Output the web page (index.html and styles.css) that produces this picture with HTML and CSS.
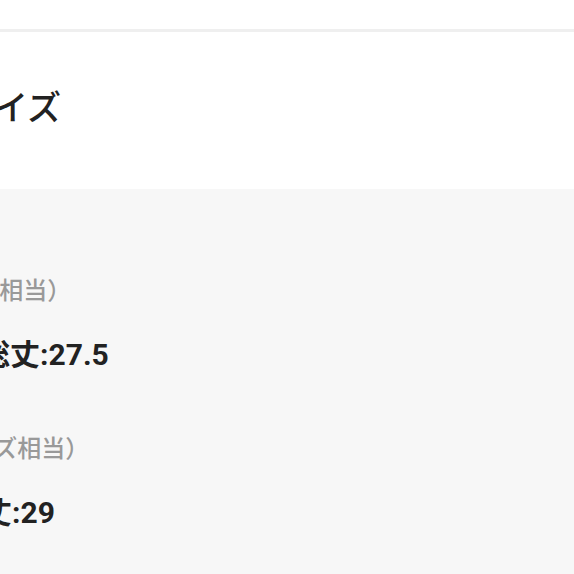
FILE: index.html
```html
<!DOCTYPE html>
<html>
<head>
  <meta charset="UTF-8">
  <meta name="viewport" content="width=device-width, initial-scale=1.0">

  <link rel="stylesheet" href="styles.css">

</head>
<body>

    <div class="topbar"></div>

    <div class="title-bar">
        <h2 class="title">サイズ</h2>
    </div>

    <div class="size-panel">
        <div class="size-group">
            <p class="size-label label-jp">（日本サイズ相当）</p>
            <p class="size-value value-total">総丈:27.5</p>
        </div>
        <div class="size-group">
            <p class="size-label label-us">（日本サイズ相当）</p>
            <p class="size-value value-length">着丈:29</p>
        </div>
    </div>

</body>
</html>
```

FILE: styles.css
```css
body {
    font-family: Roboto, "Noto Sans CJK JP", sans-serif;
    margin: 0px;
    background: #f7f7f7;
    color: #222;
    overflow: hidden;
}

.topbar {
    height: 29px;
    background: #fff;
    border-bottom: 3px solid #efefef;
}

.title-bar {
    height: 157px;
    box-sizing: border-box;
    padding-top: 55px;
    background: #fff;
}

.title {
    margin: 0 0 0 -40px;
    font-size: 34px;
    font-weight: 500;
    line-height: 42px;
    white-space: nowrap;
}

.size-panel {
    padding-top: 86px;
    display: flex;
    flex-direction: column;
    gap: 60px;
}

.size-group {
    display: flex;
    flex-direction: column;
    gap: 30px;
}

.size-group p {
    margin: 0;
    white-space: nowrap;
}

.size-label {
    font-size: 24px;
    line-height: 32px;
    font-weight: 500;
    color: #999;
}

.size-value {
    font-size: 30px;
    line-height: 36px;
    font-weight: 700;
    color: #222;
}

.label-jp {
    margin-left: -144px !important;
}

.label-us {
    margin-left: -126px !important;
}

.value-total {
    margin-left: -20px !important;
}

.value-length {
    margin-left: -48px !important;
}
```
